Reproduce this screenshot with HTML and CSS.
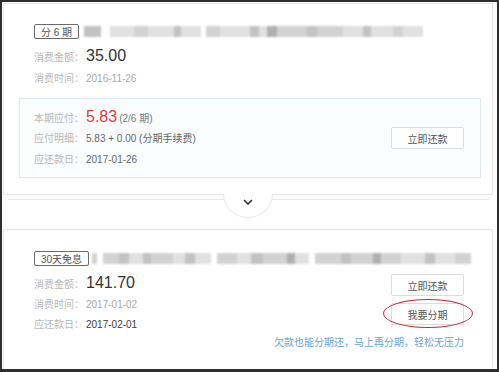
FILE: index.html
```html
<!DOCTYPE html>
<html lang="zh-CN">
<head>
<meta charset="utf-8">
<title>分期账单</title>
<link rel="stylesheet" href="styles.css">
</head>
<body>
<div class="frame">
  <section class="card card1">
    <div class="head">
      <span class="tag">分 6 期</span>
      <div class="blur">
        <i class="b2" style="width:17px"></i><i class="gap" style="width:9px"></i><i class="b4" style="width:24px"></i><i class="b3" style="width:14px"></i><i class="b4" style="width:26px"></i><i class="b2" style="width:7px"></i><i class="b4" style="width:20px"></i><i class="gap" style="width:5px"></i><i class="b3" style="width:14px"></i><i class="b4" style="width:30px"></i><i class="b2" style="width:9px"></i><i class="b4" style="width:8px"></i><i class="b1" style="width:10px"></i><i class="b3" style="width:30px"></i><i class="b2" style="width:10px"></i><i class="b3" style="width:26px"></i><i class="b4" style="width:20px"></i><i class="b2" style="width:8px"></i><i class="b4" style="width:22px"></i><i class="b3" style="width:10px"></i><i class="b4" style="width:20px"></i>
      </div>
    </div>
    <div class="row big"><span class="lbl">消费金额：</span><span class="num">35.00</span></div>
    <div class="row"><span class="lbl">消费时间：</span><span class="val muted">2016-11-26</span></div>
    <div class="box">
      <div class="box-info">
        <div class="row tall"><span class="lbl">本期应付：</span><span class="num red">5.83</span><span class="sub">(2/6 期)</span></div>
        <div class="row tall"><span class="lbl">应付明细：</span><span class="val">5.83 + 0.00 (分期手续费)</span></div>
        <div class="row"><span class="lbl">应还款日：</span><span class="val">2017-01-26</span></div>
      </div>
      <button class="btn">立即还款</button>
    </div>
    <div class="tab">
      <svg width="10" height="6" viewBox="0 0 10 6"><polyline points="1,1 5,5 9,1" fill="none" stroke="#333" stroke-width="1.6"/></svg>
    </div>
  </section>
  <div class="stack"></div>
  <section class="card card2">
    <div class="head">
      <span class="tag">30天免息</span>
      <div class="blur wide">
        <i class="b3" style="width:5px"></i><i class="gap" style="width:6px"></i><i class="b3" style="width:16px"></i><i class="b2" style="width:10px"></i><i class="b4" style="width:14px"></i><i class="b2" style="width:8px"></i><i class="b3" style="width:22px"></i><i class="b4" style="width:12px"></i><i class="b2" style="width:10px"></i><i class="b4" style="width:16px"></i><i class="gap" style="width:6px"></i><i class="b3" style="width:20px"></i><i class="b4" style="width:14px"></i><i class="b2" style="width:12px"></i><i class="b3" style="width:24px"></i><i class="b1" style="width:8px"></i><i class="b4" style="width:14px"></i><i class="gap" style="width:6px"></i><i class="b3" style="width:26px"></i><i class="b2" style="width:10px"></i><i class="b3" style="width:22px"></i><i class="b1" style="width:8px"></i><i class="b3" style="width:20px"></i><i class="b4" style="width:24px"></i><i class="b2" style="width:10px"></i><i class="b4" style="width:20px"></i><i class="b3" style="width:16px"></i>
      </div>
    </div>
    <div class="body">
      <div class="info">
        <div class="row big"><span class="lbl">消费金额：</span><span class="num">141.70</span></div>
        <div class="row"><span class="lbl">消费时间：</span><span class="val muted">2017-01-02</span></div>
        <div class="row"><span class="lbl">应还款日：</span><span class="val dark">2017-02-01</span></div>
      </div>
      <div class="actions">
        <button class="btn">立即还款</button>
        <div class="circled"><button class="btn">我要分期</button></div>
      </div>
    </div>
    <div class="hint">欠款也能分期还，马上再分期，轻松无压力</div>
  </section>
</div>
</body>
</html>
```
FILE: styles.css
```css
* { box-sizing: border-box; }
html, body { margin: 0; padding: 0; background: #fff; }
body {
  font-family: "Liberation Sans", "Noto Sans CJK SC", sans-serif;
  font-size: 10px;
  color: #666;
}
.frame {
  width: 499px;
  height: 372px;
  border: 2px solid #2e2e2e;
  border-bottom-width: 3px;
  padding: 1px 4px 0 1px;
  display: flex;
  flex-direction: column;
  overflow: hidden;
}
.card {
  border: 1px solid #e6e6e6;
  background: #fff;
}
.card1 {
  position: relative;
  padding: 19px 11px 16px 15px;
}
.head {
  display: flex;
  align-items: center;
  height: 16px;
  padding-left: 15px;
}
.tag {
  display: inline-flex;
  align-items: center;
  height: 15px;
  padding: 0 6px;
  border: 1px solid #6a6a6a;
  border-radius: 2px;
  color: #555;
  font-size: 10px;
  white-space: nowrap;
}
.blur {
  display: flex;
  height: 11px;
  margin-left: 5px;
  filter: blur(1.3px);
}
.blur.wide { margin-left: 3px; }
.blur i { display: block; height: 11px; flex: none; }
.blur .b1 { background: #b0b0b0; }
.blur .b2 { background: #c2c2c2; }
.blur .b3 { background: #d2d2d2; }
.blur .b4 { background: #e1e1e1; }
.blur .gap { background: transparent; }
.row {
  display: flex;
  align-items: baseline;
  height: 20px;
  line-height: 20px;
  padding-left: 15px;
  white-space: nowrap;
}
.card1 > .row.big { margin-top: 5px; height: 24px; line-height: 24px; }
.card1 > .row.big + .row { height: 21px; line-height: 21px; }
.lbl {
  width: 52px;
  flex: none;
  color: #b8b8b8;
}
.num {
  font-size: 16px;
  color: #333;
}
.num.red { color: #d8403c; }
.sub { margin-left: 2px; color: #777; }
.val { color: #666; }
.val.muted { color: #a8a8a8; }
.val.dark { color: #3a3a3a; }
.box {
  margin-top: 9px;
  display: flex;
  align-items: center;
  justify-content: space-between;
  padding: 7px 16px 7px 0;
  background: #fafcfe;
  border: 1px solid #dfe9f0;
}
.box .row { padding-left: 14px; }
.box .row.tall { height: 22px; line-height: 22px; }
.btn {
  width: 73px;
  height: 22px;
  padding: 0;
  background: #fff;
  border: 1px solid #dcdcdc;
  border-radius: 2px;
  font-family: "Liberation Sans", "Noto Sans CJK SC", sans-serif;
  font-size: 10px;
  color: #555;
}
.tab {
  position: absolute;
  left: 219px;
  top: 100%;
  width: 50px;
  height: 24px;
  background: #fff;
  border: 1px solid #e8e8e8;
  border-top: none;
  border-radius: 0 0 25px 25px / 0 0 24px 24px;
  display: flex;
  justify-content: center;
  align-items: flex-start;
  padding-top: 5px;
  z-index: 1;
}
.tab svg { display: block; }
.stack {
  margin: 4px 4px 29px 5px;
  border-top: 1px solid #e6e6e6;
}
.card2 {
  flex: 1;
  border-bottom: none;
  padding: 20px 28px 0 15px;
}
.body {
  display: flex;
  justify-content: space-between;
  margin-top: 5px;
}
.info .row.big { height: 24px; line-height: 24px; }
.info .row { padding-left: 15px; }
.actions {
  display: flex;
  flex-direction: column;
  gap: 7px;
  padding-top: 3px;
}
.circled { position: relative; }
.circled .btn { display: block; }
.circled::after {
  content: "";
  position: absolute;
  top: -4px;
  bottom: -3px;
  left: -8px;
  right: -9px;
  border: 1.3px solid #c42a35;
  border-radius: 50%;
  pointer-events: none;
}
.hint {
  text-align: right;
  line-height: 16px;
  color: #6aa3d8;
  white-space: nowrap;
}
```
